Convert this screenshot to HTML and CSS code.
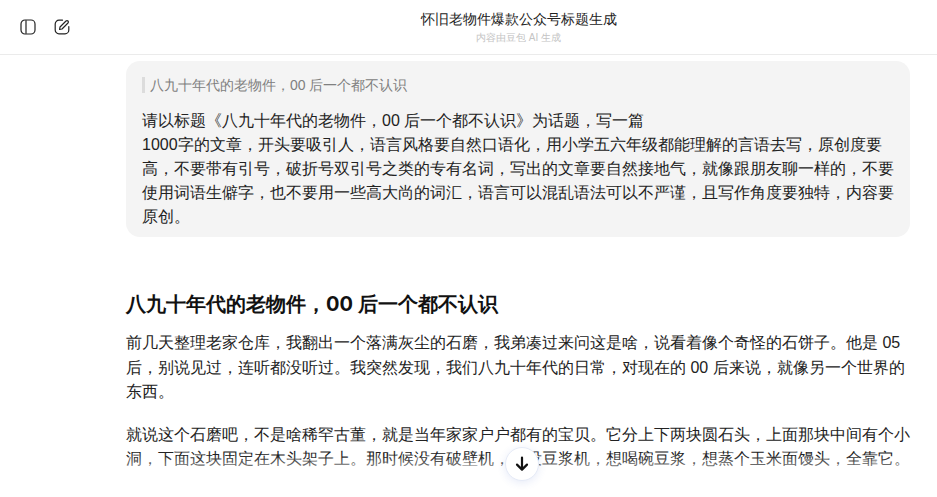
FILE: index.html
```
<!DOCTYPE html>
<html>
<head>
<meta charset="utf-8">
<title>怀旧老物件爆款公众号标题生成</title>
<link rel="stylesheet" href="styles.css">
</head>
<body>
<div class="app">
  <header class="topbar">
    <div class="tools">
      <svg class="icon" viewBox="0 0 16 16" fill="none"><rect x="1" y="1" width="14" height="14" rx="4" stroke="currentColor" stroke-width="1.2"/><path d="M6 1.2V14.8" stroke="currentColor" stroke-width="1.2"/></svg>
      <svg class="icon" viewBox="0 0 16 16" fill="none"><path d="M8.5 1.2H5A3.8 3.8 0 0 0 1.2 5v6A3.8 3.8 0 0 0 5 14.8h6a3.8 3.8 0 0 0 3.8-3.8V7.5" stroke="currentColor" stroke-width="1.2" stroke-linecap="round"/><path d="M5.6 10.4 6 8l6-6c.6-.6 1.5-.6 2 0s.6 1.4 0 2l-6 6z" stroke="currentColor" stroke-width="1.2" stroke-linejoin="round"/></svg>
    </div>
    <div class="heading">
      <div class="title">怀旧老物件爆款公众号标题生成</div>
      <div class="subtitle">内容由豆包 AI 生成</div>
    </div>
  </header>
  <main class="scroll">
    <section class="ask">
      <div class="quote">八九十年代的老物件，00 后一个都不认识</div>
      <p class="ask-text">请以标题《八九十年代的老物件，00 后一个都不认识》为话题，写一篇<br>1000字的文章，开头要吸引人，语言风格要自然口语化，用小学五六年级都能理解的言语去写，原创度要高，不要带有引号，破折号双引号之类的专有名词，写出的文章要自然接地气，就像跟朋友聊一样的，不要使用词语生僻字，也不要用一些高大尚的词汇，语言可以混乱语法可以不严谨，且写作角度要独特，内容要原创。</p>
    </section>
    <article class="answer">
      <h1 class="answer-title">八九十年代的老物件，00 后一个都不认识</h1>
      <p>前几天整理老家仓库，我翻出一个落满灰尘的石磨，我弟凑过来问这是啥，说看着像个奇怪的石饼子。他是 05 后，别说见过，连听都没听过。我突然发现，我们八九十年代的日常，对现在的 00 后来说，就像另一个世界的东西。</p>
      <p>就说这个石磨吧，不是啥稀罕古董，就是当年家家户户都有的宝贝。它分上下两块圆石头，上面那块中间有个小洞，下面这块固定在木头架子上。那时候没有破壁机，也没豆浆机，想喝碗豆浆，想蒸个玉米面馒头，全靠它。</p>
      <p>每次磨东西的时候，我妈就往小洞里放泡好的黄豆，我爸推着磨杆一圈一圈地转，白白的豆浆就顺着石缝流下来了，那味道现在的机器可比不了。</p>
    </article>
  </main>
  <div class="fade"></div>
  <button class="down" type="button" aria-label="回到底部">
    <svg viewBox="0 0 16 16" fill="none"><path d="M8 1.5V13.5M3 8.6 8 13.6l5-5" stroke="currentColor" stroke-width="2.2" stroke-linecap="round" stroke-linejoin="round"/></svg>
  </button>
</div>
</body>
</html>
```
FILE: styles.css
```
* { box-sizing: border-box; }
html, body { margin: 0; height: 100%; overflow: hidden; background: #fff; }
body { font-family: "Liberation Sans", sans-serif; color: #1f1f1f; }
.app { position: relative; height: 100vh; display: flex; flex-direction: column; overflow: hidden; }
.topbar { position: relative; flex: none; height: 55px; border-bottom: 1px solid #ebebeb; padding-left: 100px; display: flex; justify-content: center; }
.tools { position: absolute; left: 20px; top: 19px; display: flex; gap: 18px; color: #222; }
.icon { width: 16px; height: 16px; display: block; }
.heading { padding-top: 10px; text-align: center; }
.title { font-size: 14px; line-height: 18px; color: #222; }
.subtitle { margin-top: 3px; font-size: 10px; line-height: 14px; color: #c4c4c4; }
.scroll { flex: 1; min-height: 0; overflow: hidden; padding: 6px 27px 0 126px; }
.ask { background: #f4f4f4; border-radius: 14px; padding: 16px 16px 8px; }
.quote { font-size: 14px; line-height: 16px; color: #808080; border-left: 3px solid #dcdcdc; padding-left: 5px; }
.ask-text { margin: 16px 0 0; font-size: 16px; line-height: 24px; color: #222; }
.answer { margin-top: 53px; }
.answer-title { margin: 0 0 13px; font-family: Inter, sans-serif; font-size: 20px; line-height: 28px; font-weight: 700; color: #111; }
.answer p { margin: 0 0 18px; font-size: 16px; line-height: 24.5px; color: #222; }
.fade { position: absolute; left: 0; right: 0; bottom: 0; height: 42px; background: linear-gradient(rgba(255,255,255,0), #fff 70%); }
.down { position: absolute; left: 505px; top: 447px; width: 34px; height: 34px; padding: 8px; border-radius: 50%; border: 1px solid #e6ebf7; background: #fff; color: #111; box-shadow: 0 2px 8px rgba(60,90,200,.12); display: flex; }
.down svg { width: 16px; height: 16px; display: block; }
```
